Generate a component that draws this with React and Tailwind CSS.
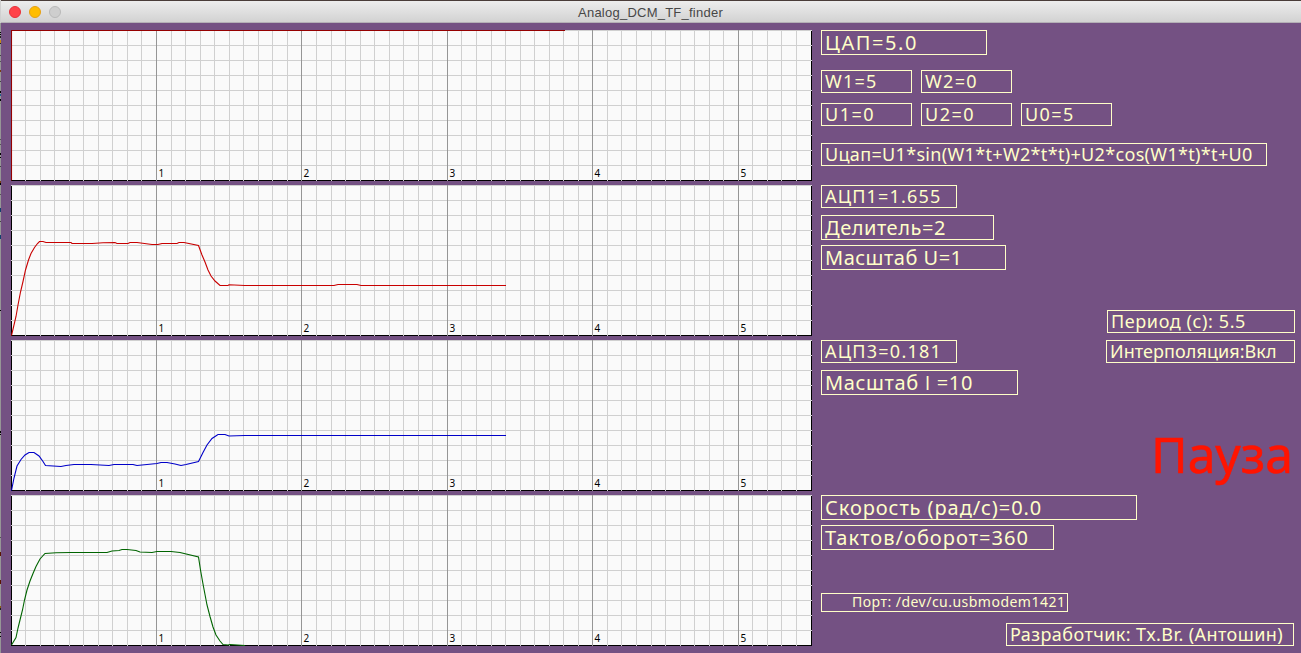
const MINOR = Array.from({ length: 54 }, (_, i) => i + 1);
const ROWS = Array.from({ length: 10 }, (_, i) => i);
const SECONDS = [1, 2, 3, 4, 5];

const SPEED =
  "0.5,150 5,142.5 7,133 9,125 11.5,115 13.5,105 16,95 19,86 22,78.5 25,71.5 29,64 34,58.5 45,57.8 60,57.5 96,57.5 101,56 108,55.5 111,54.5 116,54.5 125,55.5 129,57 141,57.5 146,56.5 160,56.5 169,57.5 187.5,62 189.5,75 192,89 194,99.5 196,110 199,121.5 202,132 205,140 209,146 212,149.5 217,150 219,149.5 234,150.5";
const VOLTAGE =
  "0.5,150.5 5,131.5 7,120 9.5,107 12,96.5 14.5,85 17.5,75 20,68.5 23.5,62.5 26.5,58.5 28.5,56.5 32,56.5 35,57.5 60,57.5 61,58.5 81,58.5 92,57.8 104,57.5 106,58.5 117,58.5 119,57.5 126,57.5 141,59.5 147,59.5 151,58.5 166,58.5 168,57.5 173,57.5 187.5,60.5 191,70 194,77 197,85 200,91 204,96 209,100.5 217,100.5 218,99.8 234,100.5 323,100.5 327,99.5 346,99.5 350,100.5 495,100.5";
const CURRENT =
  "0.5,150.5 3,138 6,126 10,119.5 14,115 18,112.5 23,112.5 28,116 32,121.5 34.5,125.5 50,126.5 55,125.5 63,124.5 80,124.5 98,125.5 103,124.5 122,124.5 126,125.5 146,123.5 150,122.5 156,122.5 164,124 170,125.5 175,124.5 187.5,121.5 192,112.5 196,105 201,98.5 207,94.5 214,94.5 218,96 234,95.5 495,95.5";

// Sliver of the desktop behind the window: [top, height, colour]
const BACKDROP = [
  [0, 23, "#d0d0d0"], [32, 1, "#000"], [34, 1, "#000"], [36, 2, "#222"], [40, 3, "#c88a14"], [43, 1, "#222"],
  [55, 1, "#444"], [61, 1, "#555"], [70, 2, "#7a3c10"], [81, 1, "#444"], [91, 2, "#000"], [94, 2, "#1e5f8c"],
  [99, 2, "#000"], [139, 1, "#555"], [144, 1, "#555"], [153, 2, "#000"], [157, 1, "#000"], [166, 1, "#444"],
  [181, 2, "#7a3c10"], [183, 2, "#000"], [194, 1, "#555"], [208, 4, "#123f6e"], [221, 1, "#444"],
  [235, 4, "#123f6e"], [310, 1, "#000"], [431, 2, "#000"], [434, 1, "#000"], [537, 1, "#555"],
  [552, 4, "#5a1400"], [580, 4, "#5a1400"], [606, 2, "#8a5a14"], [608, 2, "#222"], [632, 1, "#000"], [636, 1, "#000"],
];

function Chart({ points, stroke }) {
  return (
    <svg width="801" height="151" viewBox="0 0 801 151" className="block shrink-0">
      <rect width="801" height="151" fill="#fafafa" />
      <rect x="0.5" y="0.5" width="800" height="150" fill="none" stroke="#000" />
      {MINOR.map((k) => (
        <rect key={k} x={Math.floor((k * 160) / 11)} y="0" width="1" height="151" fill="#d0d0d0" />
      ))}
      {ROWS.map((k) => (
        <rect key={k} x="0" y={k * 15} width="801" height="1" fill="#d0d0d0" />
      ))}
      {SECONDS.map((n) => (
        <rect key={n} x={Math.floor((n * 1600) / 11)} y="0" width="1" height="151" fill="#969696" />
      ))}
      {SECONDS.map((n) => (
        <text key={n} x={Math.floor((n * 1600) / 11) + 2.5} y="147" className="font-['Noto_Sans',sans-serif] text-[10px]">
          {n}
        </text>
      ))}
      <polyline points={points} fill="none" stroke={stroke} strokeWidth="1.1" />
    </svg>
  );
}

function Field({ className, children }) {
  return (
    <div className={`flex shrink-0 items-center whitespace-pre border border-[#ffffc8] leading-none ${className}`}>
      {children}
    </div>
  );
}

export default function App() {
  return (
    <div className="flex h-[653px] w-[1301px] overflow-hidden">
      <svg width="1" height="653" viewBox="0 0 1 653" className="block shrink-0">
        <rect width="1" height="653" fill="#969696" />
        {BACKDROP.map(([y, h, fill]) => (
          <rect key={y} y={y} width="1" height={h} fill={fill} />
        ))}
      </svg>
      <div className="flex w-[1300px] flex-col border-t border-[#4a3d39] bg-[#745183] font-['Noto_Sans',sans-serif]">
        <div className="flex h-[22px] shrink-0 items-center border-b border-[#b4b0b6] bg-linear-to-b from-[#ededed] to-[#d2d2d2]">
          <div className="flex w-[60px] gap-2 pl-2">
            <span className="size-3 rounded-full border border-[#e8303a] bg-[#ff4249]" />
            <span className="size-3 rounded-full border border-[#e6a012] bg-[#ffbd00]" />
            <span className="size-3 rounded-full border border-[#b9b9b9] bg-[#cecece]" />
          </div>
          <div className="flex-1 pr-[61px] pt-[2px] text-center font-['Liberation_Sans',sans-serif] text-[13px] leading-none tracking-[0.24px] text-[#474747]">
            Analog_DCM_TF_finder
          </div>
        </div>
        <div className="flex flex-1 pt-[7px]">
          <div className="ml-[10px] flex w-[801px] shrink-0 flex-col gap-1">
            <Chart points="0.5,150.5 0.5,0.5 554,0.5" stroke="#960000" />
            <Chart points={VOLTAGE} stroke="#c80000" />
            <Chart points={CURRENT} stroke="#0000c8" />
            <Chart points={SPEED} stroke="#006400" />
          </div>
          <div className="ml-[9px] flex w-[480px] flex-col text-[18px] text-[#ffffc8]">
            <div className="flex h-[155px] flex-col">
              <Field className="h-[25px] w-[166px] pl-[3px] text-[20px] tracking-[1.58px]">ЦАП=5.0</Field>
              <div className="mt-[15px] flex gap-[9px]">
                <Field className="h-[23px] w-[91px] pb-[2px] pl-[3px] tracking-[1.2px]">W1=5</Field>
                <Field className="h-[23px] w-[91px] pb-[2px] pl-[3px] tracking-[1.3px]">W2=0</Field>
              </div>
              <div className="mt-[10px] flex gap-[9px]">
                <Field className="h-[23px] w-[91px] pb-[2px] pl-[3px] tracking-[1.5px]">U1=0</Field>
                <Field className="h-[23px] w-[91px] pb-[2px] pl-[3px] tracking-[1.5px]">U2=0</Field>
                <Field className="h-[23px] w-[91px] pb-[2px] pl-[3px] tracking-[1.4px]">U0=5</Field>
              </div>
              <Field className="mt-[17px] h-[23px] w-[446px] pb-[2px] pl-[3px] tracking-[0.33px]">
                Uцап=U1*sin(W1*t+W2*t*t)+U2*cos(W1*t)*t+U0
              </Field>
            </div>
            <div className="flex h-[155px] flex-col">
              <Field className="h-[23px] w-[136px] pb-[2px] pl-[3px] tracking-[1.2px]">АЦП1=1.655</Field>
              <Field className="mt-[7px] h-[25px] w-[173px] pl-[3px] text-[20px] tracking-[0.55px]">Делитель=2</Field>
              <Field className="mt-[5px] h-[25px] w-[185px] pl-[3px] text-[20px] tracking-[0.5px]">Масштаб U=1</Field>
              <Field className="ml-[286px] mt-[40px] h-[23px] w-[188px] pb-[2px] pl-[3px] tracking-[0.6px]">Период (с): 5.5</Field>
            </div>
            <div className="flex h-[155px] flex-col">
              <div className="flex gap-[149px]">
                <Field className="h-[23px] w-[136px] pb-[2px] pl-[3px] tracking-[1.25px]">АЦП3=0.181</Field>
                <Field className="h-[23px] w-[189px] pb-[2px] pl-[3px] tracking-[0.07px]">Интерполяция:Вкл</Field>
              </div>
              <Field className="mt-[7px] h-[25px] w-[197px] pl-[3px] text-[20px] tracking-[0.64px]">
                Масштаб <span className="font-['Open_Sans',sans-serif]">I</span> =10
              </Field>
              <div className="ml-[330px] mt-[34px] text-[50px] leading-[50px] tracking-[0.1px] text-[#ff1400] [-webkit-text-stroke:0.6px_#ff1400]">
                Пауза
              </div>
            </div>
            <Field className="h-[25px] w-[316px] pl-[3px] text-[20px] tracking-[0.93px]">Скорость (рад/с)=0.0</Field>
            <Field className="mt-[5px] h-[25px] w-[233px] pl-[3px] text-[20px] tracking-[1.03px]">Тактов/оборот=360</Field>
            <Field className="mt-[43px] h-[19px] w-[247px] pb-[2px] pl-[30px] text-[14px] tracking-[0.48px]">
              Порт: /dev/cu.usbmodem1421
            </Field>
            <Field className="ml-[185px] mt-[11px] h-[23px] w-[288px] pb-[2px] pl-[3px] tracking-[0.42px]">
              Разработчик: Tx.Br. (Антошин)
            </Field>
          </div>
        </div>
      </div>
    </div>
  );
}
